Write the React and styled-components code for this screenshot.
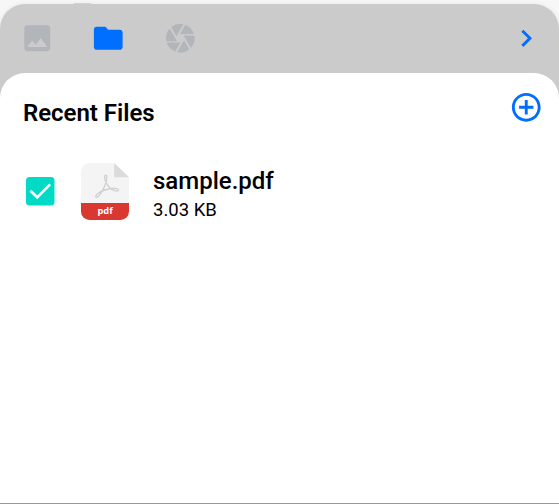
import React from "react";
import styled, { createGlobalStyle } from "styled-components";
import { MdImage, MdFolder, MdCamera, MdChevronRight, MdAddCircleOutline } from "react-icons/md";

const GlobalStyle = createGlobalStyle`
  * { box-sizing: border-box; }
  body { margin: 0; background: #f7f7f7; font-family: Roboto, sans-serif; color: #000; }
`;

const Screen = styled.main`
  height: 504px;
  padding-top: 4px;
  overflow: hidden;
  display: flex;
  flex-direction: column;
  background: #f7f7f7;
  border-bottom: 1px solid #999;
`;

const Handle = styled.div`
  width: 17px;
  height: 1px;
  margin: -1px 0 0 74px;
  background: #d9d9d9;
`;

const Sheet = styled.section`
  flex: 1;
  display: flex;
  flex-direction: column;
  background: #cbcbcb;
  border-radius: 25px 25px 0 0;
  box-shadow: 0 0 5px rgba(0, 0, 0, 0.08);
`;

const Toolbar = styled.nav`
  height: 69px;
  padding: 0 16px 0 19.5px;
  display: flex;
  align-items: center;
  justify-content: space-between;
`;

const Tabs = styled.div`
  display: flex;
  gap: 37px;
`;

const IconButton = styled.button`
  width: 34.5px;
  height: 34.5px;
  padding: 0;
  border: 0;
  background: none;
  color: ${({ $muted }) => ($muted ? "#b2b6bb" : "#006eff")};
  svg { display: block; width: 34.5px; height: 34.5px; }
`;

const Panel = styled.div`
  flex: 1;
  background: #fff;
  border-radius: 25px 25px 0 0;
`;

const PanelHeader = styled.header`
  height: 80px;
  padding: 16.5px 16px 0 23px;
  display: flex;
  align-items: flex-start;
  justify-content: space-between;
`;

const Title = styled.h1`
  margin: 9.5px 0 0;
  font-size: 24px;
  line-height: 28px;
  font-weight: 600;
  letter-spacing: -0.03px;
`;

const FileRow = styled.article`
  display: flex;
  align-items: center;
  height: 77px;
  padding-left: 26px;
`;

const CheckIcon = styled.svg`
  width: 29px;
  height: 29px;
  margin-right: 26px;
`;

const PdfIcon = styled.svg`
  width: 48px;
  height: 57px;
  margin-right: 24px;
`;

const FileInfo = styled.div`
  display: flex;
  flex-direction: column;
  padding-top: 7px;
`;

const FileName = styled.span`
  font-size: 24px;
  line-height: 29px;
  font-weight: 500;
`;

const FileSize = styled.span`
  font-size: 18.5px;
  line-height: 28px;
`;

function Checked() {
  return (
    <CheckIcon viewBox="0 0 29 29" role="checkbox" aria-checked="true">
      <rect x="0" y="0" width="28.5" height="28.5" rx="3.5" fill="#03dac5" />
      <path d="M4.5 13.7 11.2 20.3 24.1 7.4" fill="none" stroke="#fff" strokeWidth="2.6" />
    </CheckIcon>
  );
}

function PdfDocument() {
  return (
    <PdfIcon viewBox="0 0 48 57">
      <path d="M8.5 0H33.2L48 14.3V41H0V8.5A8.5 8.5 0 0 1 8.5 0Z" fill="#f4f4f4" />
      <path d="M33.2 0 48 14.3H33.2Z" fill="#dbdbdb" />
      <path d="M0 40H48V48.5A8.5 8.5 0 0 1 39.5 57H8.5A8.5 8.5 0 0 1 0 48.5Z" fill="#d93831" />
      <path
        d="M24.6 12.1C23.3 12.1 23.3 15.5 24.5 18.3C26.2 22 29.2 26 33 27.4C35.5 28.4 37.4 28.2 37.5 27C37.6 25.5 34.4 25.1 31 25.5C26 26.1 20.5 27.7 17 30.4C15 32 14.1 33.7 15.1 34.3C16.5 35 19.3 31.3 21.7 27.1C24 23 25.6 18 25.8 14.5C25.9 12.8 25.4 12.1 24.6 12.1Z"
        fill="none" stroke="#cfcfcf" strokeWidth="1.3"
      />
      <text x="24.1" y="51.4" textAnchor="middle" fill="#fff" fontFamily="'Open Sans', sans-serif" fontSize="9.5" fontWeight="700" textLength="15.2" lengthAdjust="spacingAndGlyphs">pdf</text>
    </PdfIcon>
  );
}

export default function App() {
  return (
    <>
      <GlobalStyle />
      <Screen>
        <Handle />
        <Sheet>
          <Toolbar>
            <Tabs>
              <IconButton $muted aria-label="Images"><MdImage /></IconButton>
              <IconButton aria-label="Files"><MdFolder /></IconButton>
              <IconButton $muted aria-label="Camera"><MdCamera /></IconButton>
            </Tabs>
            <IconButton aria-label="Next"><MdChevronRight /></IconButton>
          </Toolbar>
          <Panel>
            <PanelHeader>
              <Title>Recent Files</Title>
              <IconButton aria-label="Add file"><MdAddCircleOutline /></IconButton>
            </PanelHeader>
            <FileRow>
              <Checked />
              <PdfDocument />
              <FileInfo>
                <FileName>sample.pdf</FileName>
                <FileSize>3.03 KB</FileSize>
              </FileInfo>
            </FileRow>
          </Panel>
        </Sheet>
      </Screen>
    </>
  );
}
